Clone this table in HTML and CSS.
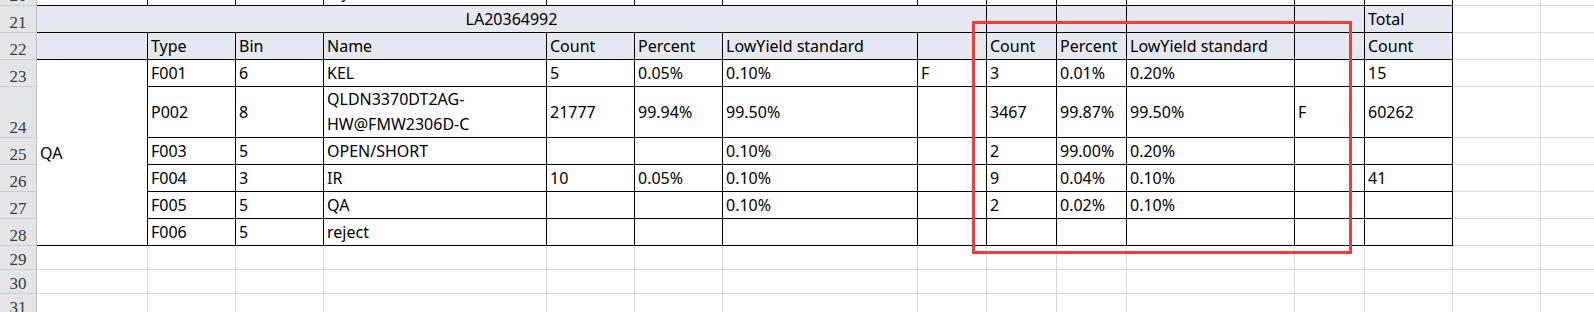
FILE: index.html
```html
<!DOCTYPE html>
<html>
<head>
<meta charset="utf-8">
<link rel="stylesheet" href="styles.css">
</head>
<body>
<div class="viewport">
  <div class="sheet">
    <!-- row 20 -->
    <div class="rh">20</div>
    <div class="c b"></div><div class="c b"></div><div class="c b"></div><div class="c b">reject</div>
    <div class="c b"></div><div class="c b"></div><div class="c b"></div><div class="c b"></div>
    <div class="c b"></div><div class="c b"></div><div class="c b"></div><div class="c b"></div>
    <div class="c b"></div><div class="c"></div><div class="c"></div>

    <!-- row 21 -->
    <div class="rh">21</div>
    <div class="c b h merged">LA20364992</div>
    <div class="c b h"></div><div class="c b h"></div><div class="c b h"></div><div class="c b h"></div>
    <div class="c b h">Total</div><div class="c"></div><div class="c"></div>

    <!-- row 22 -->
    <div class="rh">22</div>
    <div class="c b h"></div><div class="c b h">Type</div><div class="c b h">Bin</div><div class="c b h">Name</div>
    <div class="c b h">Count</div><div class="c b h">Percent</div><div class="c b h">LowYield standard</div><div class="c b h"></div>
    <div class="c b h">Count</div><div class="c b h">Percent</div><div class="c b h">LowYield standard</div><div class="c b h"></div>
    <div class="c b h">Count</div><div class="c"></div><div class="c"></div>

    <!-- row 23 -->
    <div class="rh">23</div>
    <div class="c b qa">QA</div>
    <div class="c b">F001</div><div class="c b">6</div><div class="c b">KEL</div>
    <div class="c b">5</div><div class="c b">0.05%</div><div class="c b">0.10%</div><div class="c b">F</div>
    <div class="c b">3</div><div class="c b">0.01%</div><div class="c b">0.20%</div><div class="c b"></div>
    <div class="c b">15</div><div class="c"></div><div class="c"></div>

    <!-- row 24 -->
    <div class="rh">24</div>
    <div class="c b">P002</div><div class="c b">8</div><div class="c b wrap">QLDN3370DT2AG-HW@FMW2306D-C</div>
    <div class="c b">21777</div><div class="c b">99.94%</div><div class="c b">99.50%</div><div class="c b"></div>
    <div class="c b">3467</div><div class="c b">99.87%</div><div class="c b">99.50%</div><div class="c b">F</div>
    <div class="c b">60262</div><div class="c"></div><div class="c"></div>

    <!-- row 25 -->
    <div class="rh">25</div>
    <div class="c b">F003</div><div class="c b">5</div><div class="c b">OPEN/SHORT</div>
    <div class="c b"></div><div class="c b"></div><div class="c b">0.10%</div><div class="c b"></div>
    <div class="c b">2</div><div class="c b">99.00%</div><div class="c b">0.20%</div><div class="c b"></div>
    <div class="c b"></div><div class="c"></div><div class="c"></div>

    <!-- row 26 -->
    <div class="rh">26</div>
    <div class="c b">F004</div><div class="c b">3</div><div class="c b">IR</div>
    <div class="c b">10</div><div class="c b">0.05%</div><div class="c b">0.10%</div><div class="c b"></div>
    <div class="c b">9</div><div class="c b">0.04%</div><div class="c b">0.10%</div><div class="c b"></div>
    <div class="c b">41</div><div class="c"></div><div class="c"></div>

    <!-- row 27 -->
    <div class="rh">27</div>
    <div class="c b">F005</div><div class="c b">5</div><div class="c b">QA</div>
    <div class="c b"></div><div class="c b"></div><div class="c b">0.10%</div><div class="c b"></div>
    <div class="c b">2</div><div class="c b">0.02%</div><div class="c b">0.10%</div><div class="c b"></div>
    <div class="c b"></div><div class="c"></div><div class="c"></div>

    <!-- row 28 -->
    <div class="rh">28</div>
    <div class="c b">F006</div><div class="c b">5</div><div class="c b">reject</div>
    <div class="c b"></div><div class="c b"></div><div class="c b"></div><div class="c b"></div>
    <div class="c b"></div><div class="c b"></div><div class="c b"></div><div class="c b"></div>
    <div class="c b"></div><div class="c"></div><div class="c"></div>

    <!-- row 29 -->
    <div class="rh">29</div>
    <div class="c"></div><div class="c"></div><div class="c"></div><div class="c"></div><div class="c"></div>
    <div class="c"></div><div class="c"></div><div class="c"></div><div class="c"></div><div class="c"></div>
    <div class="c"></div><div class="c"></div><div class="c"></div><div class="c"></div><div class="c"></div>

    <!-- row 30 -->
    <div class="rh">30</div>
    <div class="c"></div><div class="c"></div><div class="c"></div><div class="c"></div><div class="c"></div>
    <div class="c"></div><div class="c"></div><div class="c"></div><div class="c"></div><div class="c"></div>
    <div class="c"></div><div class="c"></div><div class="c"></div><div class="c"></div><div class="c"></div>

    <!-- row 31 -->
    <div class="rh">31</div>
    <div class="c"></div><div class="c"></div><div class="c"></div><div class="c"></div><div class="c"></div>
    <div class="c"></div><div class="c"></div><div class="c"></div><div class="c"></div><div class="c"></div>
    <div class="c"></div><div class="c"></div><div class="c"></div><div class="c"></div><div class="c"></div>
  </div>
  <div class="highlight"></div>
</div>
</body>
</html>
```
FILE: styles.css
```css
html, body {
  margin: 0;
  padding: 0;
  background: #ffffff;
}

.viewport {
  position: relative;
  width: 1594px;
  height: 312px;
  overflow: hidden;
}

.sheet {
  display: grid;
  grid-template-columns: 37px 111px 88px 88px 223px 88px 88px 195px 69px 70px 70px 168px 70px 88px 88px 88px;
  grid-template-rows: 27px 27px 27px 27px 51px 27px 27px 27px 27px 24px 24px 24px;
  width: 1629px;
  margin-top: -21px;
  font-family: "Noto Sans", "Open Sans", sans-serif;
  font-size: 16px;
  color: #000000;
}

.rh {
  box-sizing: border-box;
  background: #e3e5e8;
  border-right: 1px solid #bfc2c6;
  border-bottom: 1px solid #cbcdd1;
  display: flex;
  justify-content: center;
  align-items: flex-end;
  padding-bottom: 1px;
  font-family: "Liberation Serif", serif;
  font-size: 17px;
  line-height: 17px;
  color: #3a3a3a;
}

.c {
  box-sizing: border-box;
  border-right: 1px solid #dadada;
  border-bottom: 1px solid #dadada;
  display: flex;
  align-items: center;
  padding: 0 3px;
  white-space: nowrap;
  overflow: hidden;
  line-height: 20px;
}

.c.b {
  border-right-color: #000000;
  border-bottom-color: #000000;
}

.c.h {
  background: #e6e8ef;
}

.merged {
  grid-column: span 8;
  justify-content: center;
}

.qa {
  grid-row: span 6;
}

.wrap {
  white-space: normal;
  line-height: 25px;
}

.highlight {
  position: absolute;
  left: 972px;
  top: 21px;
  width: 380px;
  height: 233px;
  box-sizing: border-box;
  border: 3px solid #f03c3c;
  pointer-events: none;
}
```
